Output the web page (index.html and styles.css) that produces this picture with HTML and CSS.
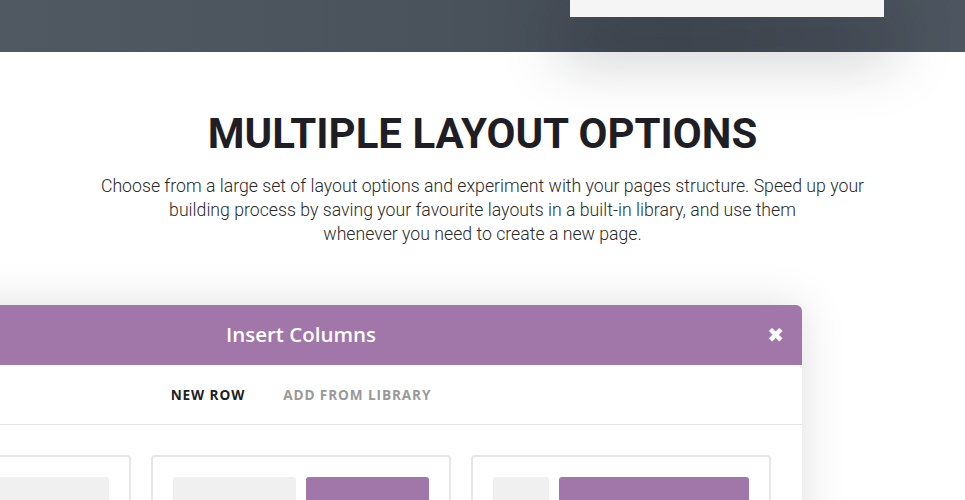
FILE: index.html
```html
<!DOCTYPE html>
<html lang="en">
<head>
  <meta charset="UTF-8" />
  <title>Multiple Layout Options</title>
  <link rel="stylesheet" href="styles.css">
</head>
<body>
<div class="hero">
  <div class="hero-window"></div>
</div>

<section class="intro">
  <h1>MULTIPLE LAYOUT OPTIONS</h1>
  <p>Choose from a large set of layout options and experiment with your pages structure. Speed up your<br>
    building process by saving your favourite layouts in a built-in library, and use them<br>
    whenever you need to create a new page.</p>
</section>

<div class="modal">
  <div class="modal-header">
    <span class="modal-title">Insert Columns</span>
    <span class="modal-close">&#10006;</span>
  </div>
  <div class="modal-tabs">
    <span class="tab active">NEW ROW</span>
    <span class="tab">ADD FROM LIBRARY</span>
  </div>
  <div class="layouts">
    <div class="layout-card">
      <div class="col col-gray col-full"></div>
    </div>
    <div class="layout-card">
      <div class="col col-gray col-half"></div>
      <div class="col col-purple col-half"></div>
    </div>
    <div class="layout-card">
      <div class="col col-gray col-quarter"></div>
      <div class="col col-purple col-rest"></div>
    </div>
  </div>
</div>
</body>
</html>
```

FILE: styles.css
```css
html, body {
    margin: 0;
    padding: 0;
    background: #ffffff;
    overflow: hidden;
}

body {
    width: 965px;
    height: 500px;
}

.hero {
    position: relative;
    z-index: 2;
    height: 52px;
    background: linear-gradient(90deg, #505862 0%, #4a525c 45%, #444b55 70%, #4d5560 100%);
    display: flex;
    padding-left: 570px;
}

.hero-window {
    width: 314px;
    height: 17px;
    background: #f5f5f5;
    box-shadow: 0 30px 60px 10px rgba(20, 24, 32, 0.26);
}

.intro {
    text-align: center;
    padding-top: 60px;
}

h1 {
    margin: 0;
    font-family: Roboto, sans-serif;
    font-weight: 700;
    font-size: 42px;
    line-height: 44px;
    color: #1e1e24;
}

.intro p {
    margin: 18px auto 0;
    font-family: Roboto, sans-serif;
    font-weight: 300;
    font-size: 17.7px;
    line-height: 24px;
    color: #2a2a2a;
}

.modal {
    margin: 59px 0 0 -200px;
    width: 1002px;
    background: #ffffff;
    border-radius: 6px 6px 0 0;
    box-shadow: 0 0 45px rgba(0, 0, 0, 0.13);
}

.modal-header {
    position: relative;
    height: 58px;
    padding-bottom: 2px;
    background: #a176a9;
    border-radius: 6px 6px 0 0;
    display: flex;
    align-items: center;
    justify-content: center;
}

.modal-title {
    font-family: "Open Sans", sans-serif;
    font-weight: 600;
    font-size: 20.5px;
    color: #ffffff;
}

.modal-close {
    position: absolute;
    right: 18px;
    top: 18px;
    font-size: 20px;
    line-height: 24px;
    color: #ffffff;
    font-family: "DejaVu Sans", sans-serif;
    font-weight: bold;
}

.modal-tabs {
    height: 59px;
    border-bottom: 1px solid #e5e5e5;
    display: flex;
    align-items: center;
    justify-content: center;
    gap: 38px;
}

.tab {
    font-family: "Open Sans", sans-serif;
    font-weight: 700;
    font-size: 13.6px;
    letter-spacing: 0.9px;
    color: #999999;
}

.tab.active {
    color: #222222;
}

.layouts {
    display: flex;
    gap: 20px;
    padding: 30px 0 0 31px;
}

.layout-card {
    width: 256px;
    height: 80px;
    padding: 20px;
    border: 2px solid #e6e6e6;
    border-radius: 4px;
    display: flex;
    gap: 10px;
}

.col {
    height: 60px;
    border-radius: 3px;
}

.col-gray {
    background: #f0f0f0;
}

.col-purple {
    background: #a176a9;
}

.col-full {
    flex: 1;
}

.col-half {
    flex: 1;
}

.col-quarter {
    width: 56px;
}

.col-rest {
    flex: 1;
}
```
